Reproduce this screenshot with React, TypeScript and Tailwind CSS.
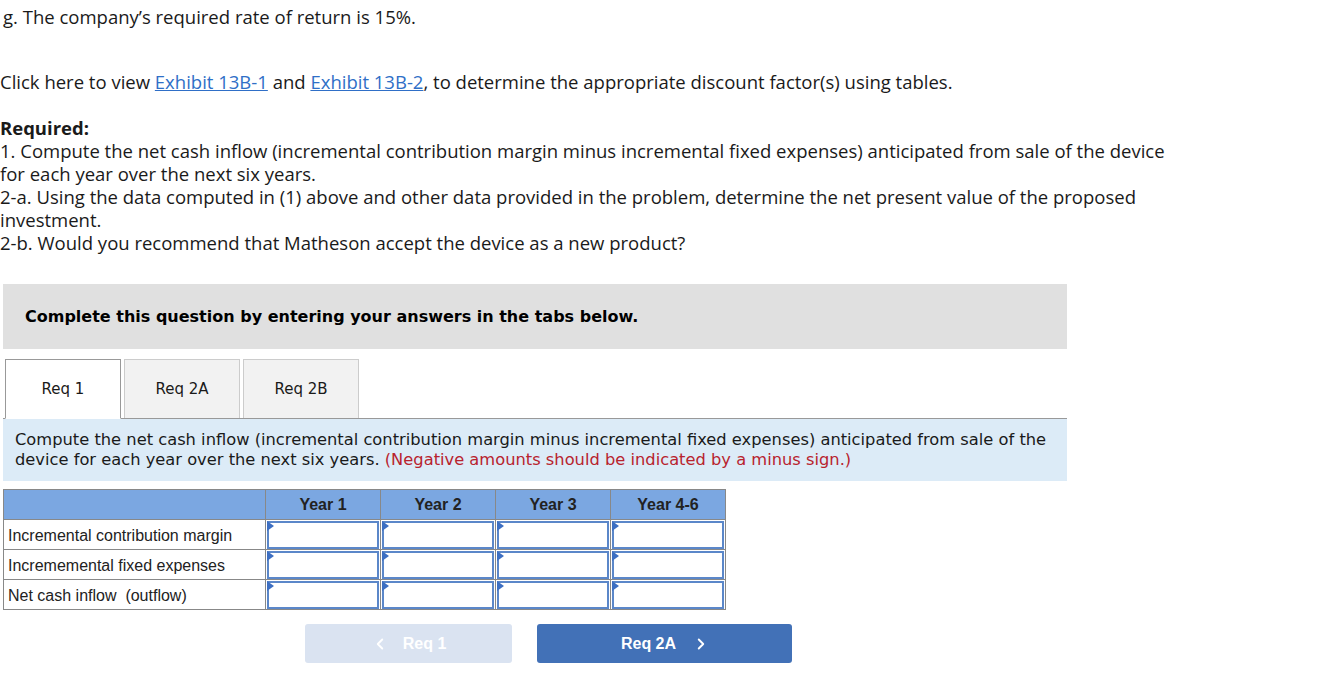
import { ChevronLeft, ChevronRight } from 'lucide-react'

const YEARS = ['Year 1', 'Year 2', 'Year 3', 'Year 4-6']
const ROWS = ['Incremental contribution margin', 'Incrememental fixed expenses', 'Net cash inflow  (outflow)']

function Cell() {
  return (
    <td className="border border-[#888] p-0 w-[115px] h-[30px]">
      <div className="relative h-[28px] mx-px border-2 border-[#5b87c9]">
        <span className="absolute -left-0.5 -top-0.5 w-0 h-0 border-t-[5px] border-b-[5px] border-l-[7px] border-t-transparent border-b-transparent border-l-[#3d6fc2]" />
      </div>
    </td>
  )
}

export default function App() {
  return (
    <div className="w-[1330px] h-[686px] bg-white text-[#1a1a1a] overflow-hidden" style={{ fontFamily: '"Open Sans", Lato, sans-serif' }}>
      <div className="text-[18.5px] leading-[23px]">
        <p className="pl-[3px] pt-[5px]">g. The company’s required rate of return is 15%.</p>
        <p className="mt-[42px]">
          Click here to view <a className="text-[#2f6fc7] underline">Exhibit 13B-1</a> and{' '}
          <a className="text-[#2f6fc7] underline">Exhibit 13B-2</a>, to determine the appropriate discount factor(s) using tables.
        </p>
        <div className="mt-[23px] w-[1172px]">
          <p className="font-bold">Required:</p>
          <p>1. Compute the net cash inflow (incremental contribution margin minus incremental fixed expenses) anticipated from sale of the device for each year over the next six years.</p>
          <p>2-a. Using the data computed in (1) above and other data provided in the problem, determine the net present value of the proposed investment.</p>
          <p>2-b. Would you recommend that Matheson accept the device as a new product?</p>
        </div>
      </div>

      <div className="ml-[3px] w-[1064px] mt-[30px]" style={{ fontFamily: '"DejaVu Sans", Verdana, sans-serif' }}>
        <div className="h-[65px] bg-[#e0e0e0] flex items-center pl-[22px] text-[16px] font-bold text-black">
          Complete this question by entering your answers in the tabs below.
        </div>

        <div className="mt-[10px] flex items-end gap-[3px] pl-[2px] border-b border-[#999] h-[60px]">
          <div className="w-[116px] h-[60px] -mb-px bg-white border border-[#999] border-b-white flex items-center justify-center text-[15px]">Req 1</div>
          <div className="w-[116px] h-[59px] bg-[#f2f2f2] border border-[#ccc] border-b-0 flex items-center justify-center text-[15px]">Req 2A</div>
          <div className="w-[116px] h-[59px] bg-[#f2f2f2] border border-[#ccc] border-b-0 flex items-center justify-center text-[15px]">Req 2B</div>
        </div>

        <div className="h-[62px] bg-[#dcebf7] px-[12px] pt-[11px] text-[16.3px] leading-[20px] text-[#1a1a1a]">
          Compute the net cash inflow (incremental contribution margin minus incremental fixed expenses) anticipated from sale of the device for each year over the next six years.{' '}
          <span className="text-[#b8232e]">(Negative amounts should be indicated by a minus sign.)</span>
        </div>
      </div>

      <table className="ml-[3px] mt-[8px] border-collapse text-[16px]" style={{ fontFamily: '"Liberation Sans", Arial, sans-serif' }}>
        <thead>
          <tr className="bg-[#7ba7e1] h-[30px]">
            <th className="border border-[#888] w-[262px]" />
            {YEARS.map(y => (
              <th key={y} className="border border-[#888] w-[115px] font-bold text-[#222]">{y}</th>
            ))}
          </tr>
        </thead>
        <tbody>
          {ROWS.map(r => (
            <tr key={r} className="h-[30px]">
              <td className="border border-[#888] px-[4px] pt-[3px] text-left text-[#222] whitespace-pre">{r}</td>
              {YEARS.map(y => <Cell key={y} />)}
            </tr>
          ))}
        </tbody>
      </table>

      <div className="flex gap-[25px] ml-[305px] mt-[14px]" style={{ fontFamily: '"Liberation Sans", Arial, sans-serif' }}>
        <div className="w-[207px] h-[39px] rounded-[3px] bg-[#dae3f1] flex items-center justify-center gap-[14px] text-white font-bold text-[16px]">
          <ChevronLeft size={18} strokeWidth={2.5} />
          <span>Req 1</span>
        </div>
        <div className="w-[255px] h-[39px] rounded-[3px] bg-[#4271b7] flex items-center justify-center gap-[16px] text-white font-bold text-[16px] pl-[2px]">
          <span>Req 2A</span>
          <ChevronRight size={18} strokeWidth={2.5} />
        </div>
      </div>
    </div>
  )
}
